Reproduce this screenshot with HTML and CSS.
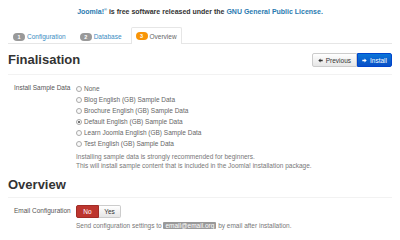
FILE: index.html
```html
<!DOCTYPE html>
<html lang="en">
<head>
	<meta charset="UTF-8">
	<title>Joomla! Installation</title>
	<link rel="stylesheet" href="styles.css">
</head>
<body>
	<div class="banner">
		<a href="#">Joomla!<sup>&reg;</sup></a> is free software released under the <a href="#">GNU General Public License.</a>
	</div>
	<ul class="tabs">
		<li><span class="badge">1</span><a href="#">Configuration</a></li>
		<li><span class="badge">2</span><a href="#">Database</a></li>
		<li class="active"><span class="badge orange">3</span><a href="#">Overview</a></li>
	</ul>

	<div class="section-head">
		<h2>Finalisation</h2>
		<div class="btn-group">
			<a class="btn" href="#"><svg class="arrow" viewBox="0 0 8 8"><path d="M0.5 4 L4 0.8 L4 2.8 L7.5 2.8 L7.5 5.2 L4 5.2 L4 7.2 Z" fill="#333"/></svg>Previous</a>
			<a class="btn primary" href="#"><svg class="arrow" viewBox="0 0 8 8"><path d="M7.5 4 L4 0.8 L4 2.8 L0.5 2.8 L0.5 5.2 L4 5.2 L4 7.2 Z" fill="#fff"/></svg>Install</a>
		</div>
	</div>

	<div class="row">
		<div class="label">Install Sample Data</div>
		<div class="controls">
			<div class="radio"><span class="dot"></span>None</div>
			<div class="radio"><span class="dot"></span>Blog English (GB) Sample Data</div>
			<div class="radio"><span class="dot"></span>Brochure English (GB) Sample Data</div>
			<div class="radio"><span class="dot checked"></span>Default English (GB) Sample Data</div>
			<div class="radio"><span class="dot"></span>Learn Joomla English (GB) Sample Data</div>
			<div class="radio"><span class="dot"></span>Test English (GB) Sample Data</div>
			<p class="help">Installing sample data is strongly recommended for beginners.<br>This will install sample content that is included in the Joomla! installation package.</p>
		</div>
	</div>

	<div class="section-head second">
		<h2>Overview</h2>
	</div>

	<div class="row email">
		<div class="label">Email Configuration</div>
		<div class="controls">
			<div class="toggle">
				<span class="no">No</span><span class="yes">Yes</span>
			</div>
			<p class="help">Send configuration settings to <span class="mail">email@email.org</span> by email after installation.</p>
		</div>
	</div>
</body>
</html>
```
FILE: styles.css
```css
body {
	margin: 0;
	font-family: "Liberation Sans", Arial, sans-serif;
	font-size: 6.5px;
	color: #555;
	background: #fff;
}
a {
	color: #2a7ab0;
	text-decoration: none;
}
.banner {
	height: 22px;
	line-height: 23px;
	text-align: center;
	font-size: 7px;
	font-weight: bold;
	color: #333;
}
.banner sup {
	font-size: 4px;
	vertical-align: 3px;
	line-height: 0;
}
.tabs {
	list-style: none;
	margin: 6px 8px 0;
	padding: 0;
	display: flex;
	border-bottom: 1px solid #e6e6e6;
	font-size: 6.5px;
}
.tabs li {
	display: flex;
	align-items: center;
	gap: 2px;
	height: 15px;
	padding: 0 4px;
	margin-right: 4px;
	border: 1px solid transparent;
	border-bottom: 0;
	margin-bottom: -1px;
}
.tabs li a {
	color: #3a8cc2;
}
.tabs li.active {
	border-color: #e6e6e6;
	background: #fff;
	border-radius: 2px 2px 0 0;
	height: 16px;
	margin-top: -1px;
}
.tabs li.active a {
	color: #666;
}
.badge {
	display: inline-block;
	width: 12px;
	height: 8px;
	line-height: 8px;
	border-radius: 4px;
	background: #999;
	color: #fff;
	font-weight: bold;
	font-size: 5.5px;
	text-align: center;
}
.badge.orange {
	background: #f89406;
}
.section-head {
	display: flex;
	justify-content: space-between;
	align-items: center;
	margin: 7px 8px 0;
	padding-bottom: 5px;
	border-bottom: 1px solid #f2f2f2;
}
.section-head.second {
	margin-top: 6px;
	padding-bottom: 3px;
}
h2 {
	margin: 0;
	font-size: 13px;
	font-weight: bold;
	color: #333;
	line-height: 18px;
}
.btn-group {
	display: flex;
}
.btn {
	display: flex;
	align-items: center;
	gap: 3px;
	height: 12px;
	padding: 0 5px;
	border: 1px solid #ccc;
	background: linear-gradient(#fff, #e6e6e6);
	color: #333;
	font-size: 6.5px;
}
.btn:first-child {
	border-radius: 2px 0 0 2px;
}
.btn.primary {
	border-color: #0044cc;
	background: linear-gradient(#0a74d8, #0a4fc6);
	color: #fff;
	border-radius: 0 2px 2px 0;
	padding: 0 4px;
}
.arrow {
	width: 5px;
	height: 5px;
}
.row {
	display: flex;
	margin: 8px 8px 0 14px;
}
.row.email {
	margin-top: 7px;
}
.label {
	width: 62px;
	flex: none;
	color: #555;
	line-height: 9px;
}
.email .label {
	line-height: 12px;
}
.radio {
	display: flex;
	align-items: center;
	gap: 2px;
	height: 11px;
	color: #666;
}
.dot {
	width: 4px;
	height: 4px;
	border: 1px solid #aaa;
	border-radius: 50%;
	background: #fafafa;
	position: relative;
}
.dot.checked::after {
	content: "";
	position: absolute;
	left: 1px;
	top: 1px;
	width: 2px;
	height: 2px;
	border-radius: 50%;
	background: #444;
}
.help {
	margin: 3px 0 0;
	line-height: 9px;
	color: #777;
}
.toggle {
	display: flex;
	height: 13px;
}
.toggle span {
	width: 21px;
	display: flex;
	align-items: center;
	justify-content: center;
	border: 1px solid #ccc;
	font-size: 6.5px;
}
.toggle .no {
	background: #bd362f;
	border-color: #a12c26;
	color: #fff;
	border-radius: 2px 0 0 2px;
}
.toggle .yes {
	background: linear-gradient(#fff, #e6e6e6);
	color: #333;
	border-left: 0;
	border-radius: 0 2px 2px 0;
}
.mail {
	background: #999;
	color: #fff;
	padding: 0 2px;
	border-radius: 1px;
}
```
